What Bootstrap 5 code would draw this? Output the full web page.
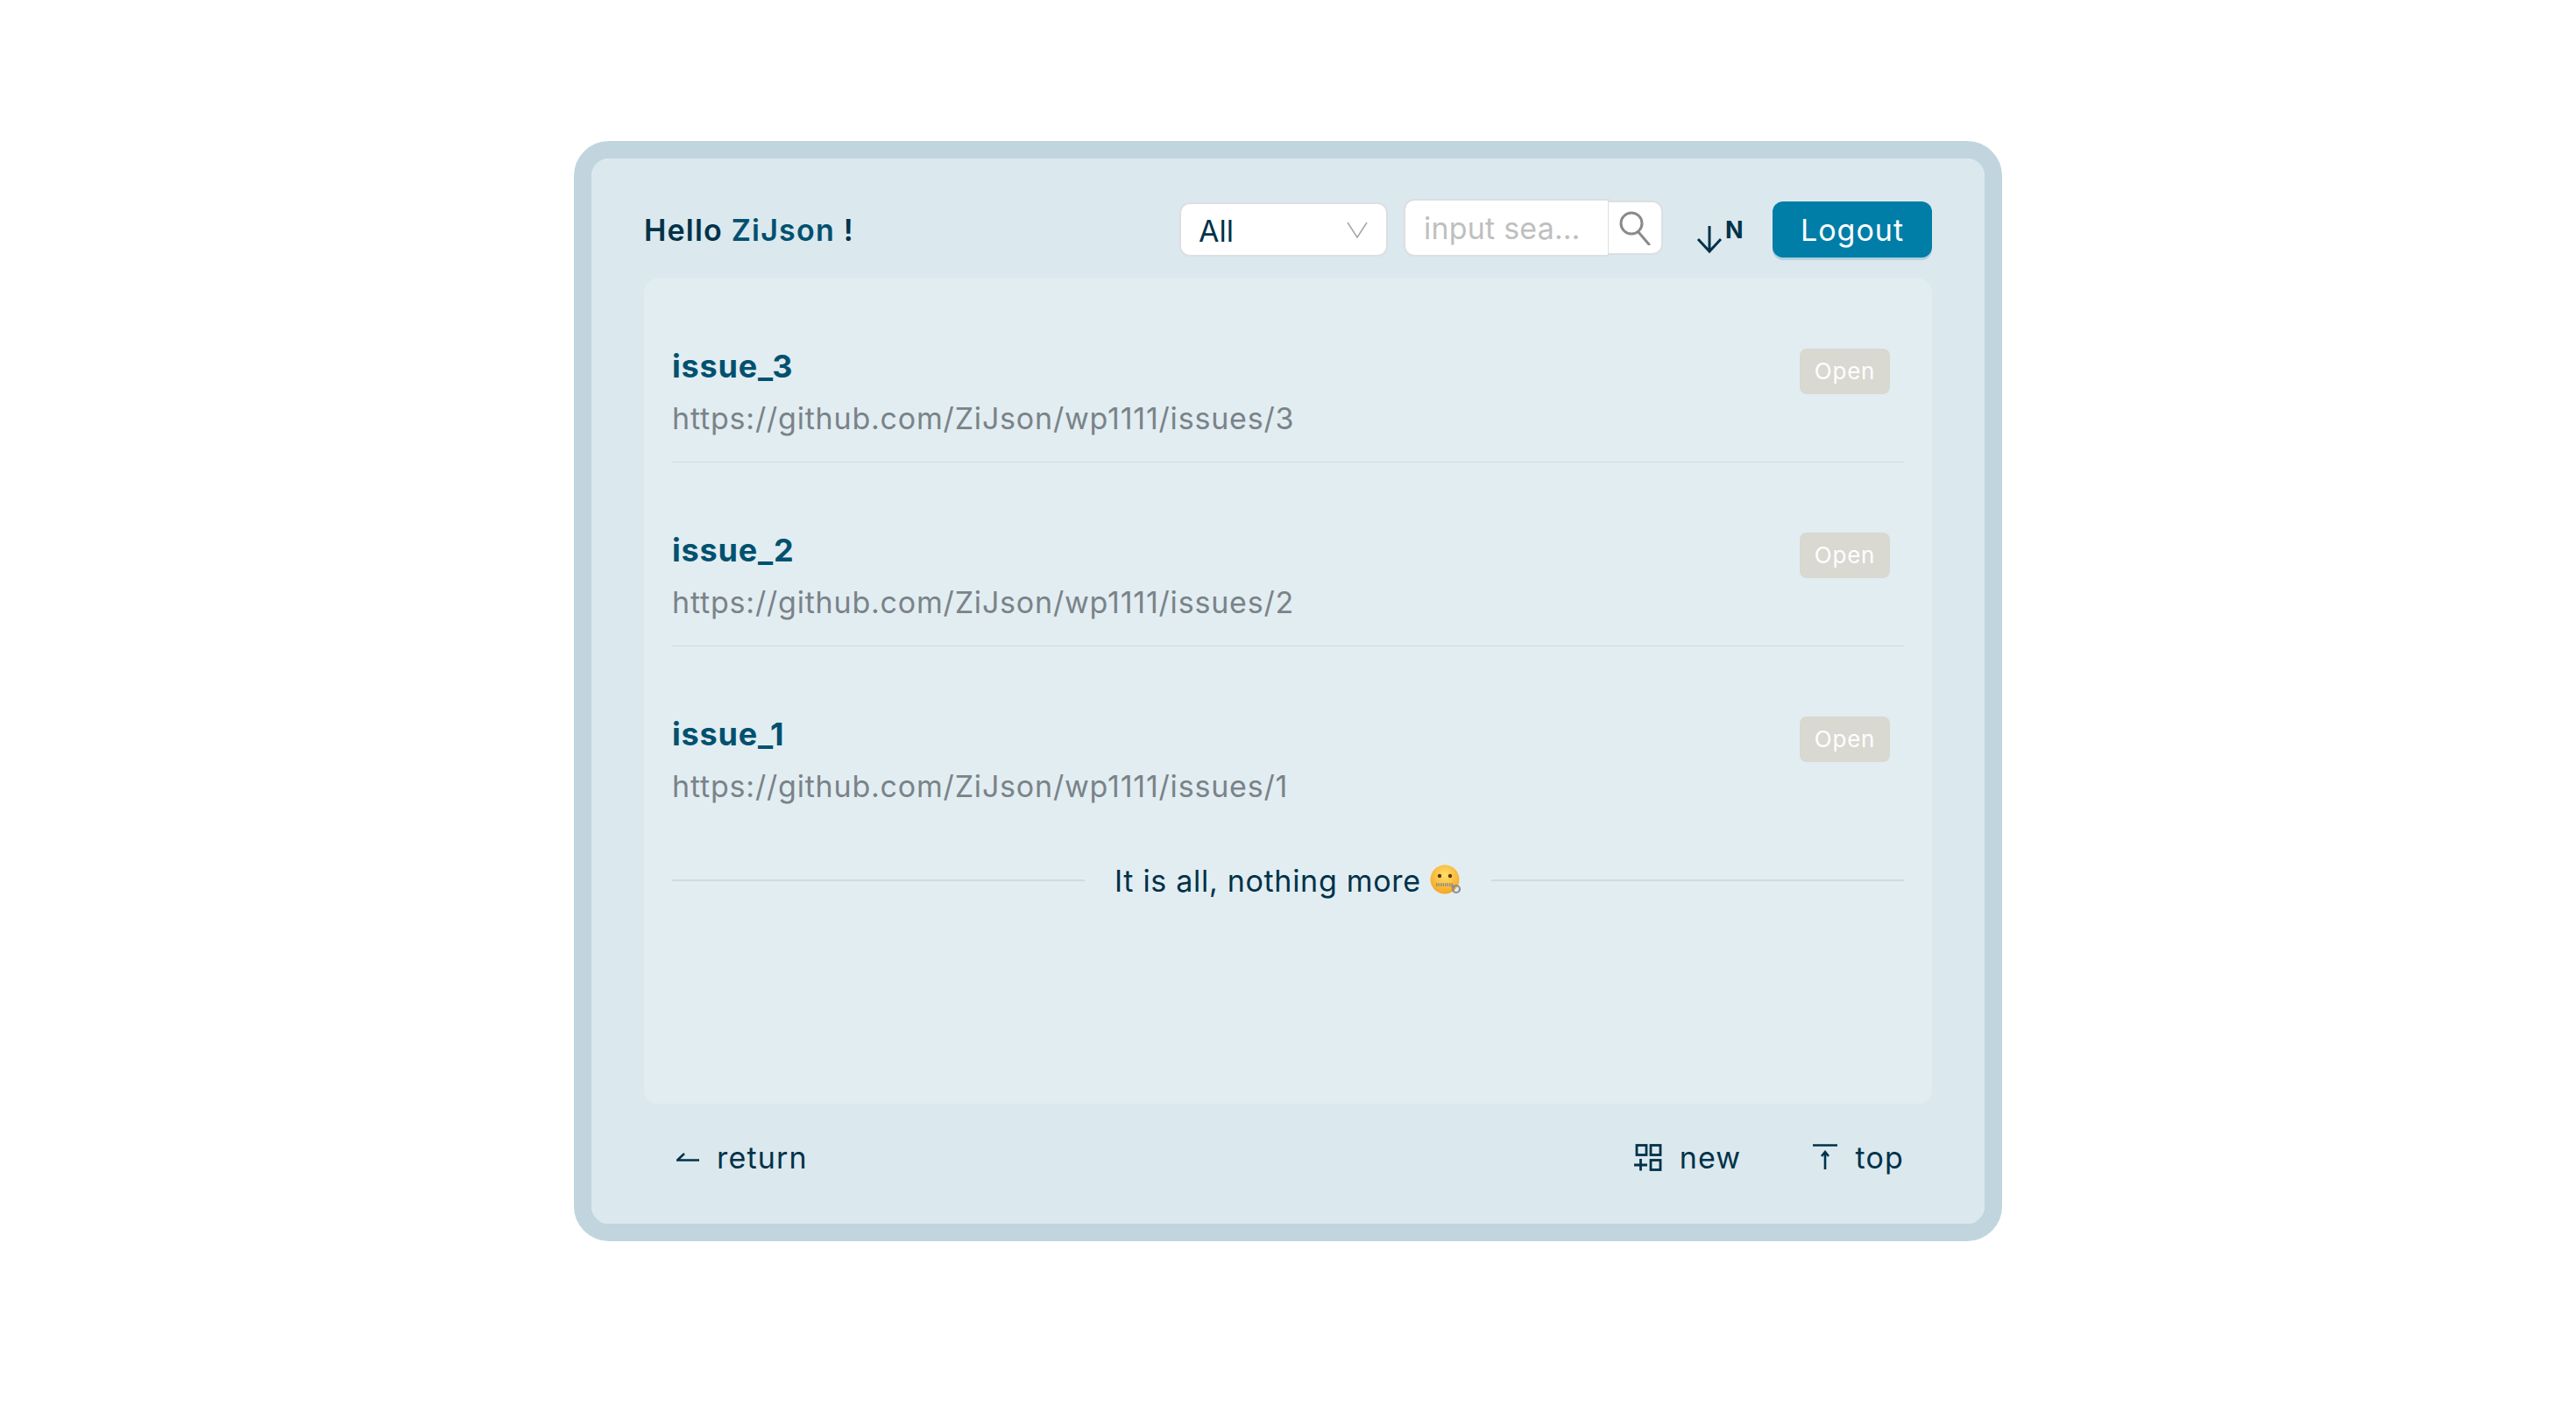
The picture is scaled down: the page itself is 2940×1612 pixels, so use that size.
<!DOCTYPE html>
<html lang="en">
<head>
  <meta charset="UTF-8" />
  <meta name="viewport" content="width=device-width, initial-scale=1.0"/>
  <title>Issues</title>
  <link href="https://cdn.jsdelivr.net/npm/bootstrap@5.3.0/dist/css/bootstrap.min.css" rel="stylesheet">
  <style>
    body {
      background: #fff;
      color: #003249;
      font-family: Inter, "Liberation Sans", sans-serif;
    }

    .frame {
      width: 1630px;
      height: 1256px;
      margin: 161px auto 0;
      padding: 0 60px;
      background: #dbe8ee;
      border: 20px solid #c0d5dd;
      border-radius: 40px;
      background-clip: padding-box;
    }

    .top-bar { height: 137px; padding-top: 25px; }

    .hello {
      font-size: 34px;
      font-weight: 600;
      letter-spacing: 1.2px;
    }

    .hello span { color: #00516f; }

    .kind-select {
      width: 238px;
      height: 62px;
      padding: 2px 20px 0;
      font-size: 34px;
      color: #003249;
      border: 2px solid #dcdfe1;
      border-radius: 12px;
      background-position: right 20px center;
      background-size: 26px 26px;
      background-image: url("data:image/svg+xml,%3csvg xmlns='http://www.w3.org/2000/svg' viewBox='0 0 26 26'%3e%3cpath fill='none' stroke='%23a8a8a8' stroke-width='1.6' d='M2 5l11 17L24 5'/%3e%3c/svg%3e");
    }

    .search-box { width: 296px; margin: -4px 0 0 18px; align-items: center; }

    .search-box .form-control {
      height: 66px;
      padding: 0 21px;
      font-size: 34px;
      letter-spacing: .2px;
      color: #003249;
      border: 2px solid #dcdfe1;
      border-radius: 12px 0 0 12px;
      text-overflow: ellipsis;
    }

    .search-box .form-control::placeholder { color: #bfbfbf; }

    .search-btn {
      width: 62px;
      height: 62px;
      padding: 0;
      background: #fff;
      border: 2px solid #dcdfe1;
      border-left: 0;
      border-radius: 0 12px 12px 0;
    }

    .sort-btn { margin-left: 38px; margin-right: 33px; width: 54px; height: 60px; }

    .logout-btn {
      width: 182px;
      height: 64px;
      padding: 0;
      font-size: 34px;
      letter-spacing: 1px;
      color: #fff;
      background: #007ea7;
      border: 0;
      border-radius: 12px;
      box-shadow: 0 3px 0 #afd2dc;
    }

    .issue-panel {
      height: 942px;
      padding: 0 32px;
      background: #e2edf2;
      border-radius: 16px;
    }

    .issue-row {
      height: 210px;
      padding: 0;
      background: transparent;
      border-color: #cfdbe1;
      border-width: 0 0 2px;
    }

    .issue-row:last-child { border-bottom-width: 0; }

    .issue-text { padding-top: 76px; }

    .issue-title {
      font-size: 36px;
      line-height: 48px;
      font-weight: 700;
      letter-spacing: .8px;
      color: #00516f;
    }

    .issue-url {
      margin-top: 13px;
      font-size: 34px;
      line-height: 46px;
      letter-spacing: .8px;
      color: #7a8388;
    }

    .open-tag {
      width: 103px;
      height: 52px;
      margin: 80px 16px 0 0;
      padding: 0;
      font-size: 26px;
      font-weight: 400;
      line-height: 52px;
      letter-spacing: .8px;
      color: #fff;
      background: #d9d8d1;
      border-radius: 8px;
    }

    .end-line { margin-top: 34px; height: 46px; }

    .end-line hr {
      flex: 1;
      margin: 0;
      border: 0;
      border-top: 2px solid #cfdbe1;
      opacity: 1;
    }

    .end-text {
      padding: 0 34px;
      font-size: 34px;
      letter-spacing: .7px;
      white-space: nowrap;
    }

    .end-text svg { vertical-align: -5px; }

    .foot-bar { height: 137px; padding: 0 32px 15px 37px; }

    .foot-link {
      font-size: 34px;
      letter-spacing: 1.2px;
      color: #003249;
      padding: 0;
      border: 0;
      background: none;
      gap: 20px;
    }

    .foot-new { margin-right: 82px; }
  </style>
</head>
<body>
  <div class="frame d-flex flex-column">
    <div class="top-bar d-flex align-items-center">
      <div class="hello me-auto">Hello <span>ZiJson</span> !</div>
      <select class="form-select kind-select">
        <option>All</option>
      </select>
      <div class="input-group search-box flex-nowrap">
        <input type="text" class="form-control" placeholder="input search text">
        <button class="btn search-btn d-flex align-items-center justify-content-center" type="button">
          <svg width="38" height="40" viewBox="0 0 38 40" fill="none" stroke="#8a8a8a" stroke-width="3">
            <circle cx="15" cy="15" r="12"/>
            <path d="M23 25l12 14" stroke-linecap="round"/>
          </svg>
        </button>
      </div>
      <div class="sort-btn">
        <svg width="54" height="60" viewBox="0 0 54 60">
          <path d="M15 26v29M2 41l13 14 13-14" fill="none" stroke="#003249" stroke-width="3"/>
          <text x="33" y="40" font-size="27" font-weight="700" fill="#003249" font-family="Inter, sans-serif">N</text>
        </svg>
      </div>
      <button class="btn logout-btn" type="button">Logout</button>
    </div>

    <div class="issue-panel">
      <ul class="list-group list-group-flush">
        <li class="list-group-item issue-row d-flex justify-content-between">
          <div class="issue-text">
            <div class="issue-title">issue_3</div>
            <div class="issue-url">https://github.com/ZiJson/wp1111/issues/3</div>
          </div>
          <span class="badge open-tag">Open</span>
        </li>
        <li class="list-group-item issue-row d-flex justify-content-between">
          <div class="issue-text">
            <div class="issue-title">issue_2</div>
            <div class="issue-url">https://github.com/ZiJson/wp1111/issues/2</div>
          </div>
          <span class="badge open-tag">Open</span>
        </li>
        <li class="list-group-item issue-row d-flex justify-content-between">
          <div class="issue-text">
            <div class="issue-title">issue_1</div>
            <div class="issue-url">https://github.com/ZiJson/wp1111/issues/1</div>
          </div>
          <span class="badge open-tag">Open</span>
        </li>
      </ul>
      <div class="end-line d-flex align-items-center">
        <hr>
        <div class="end-text">It is all, nothing more <svg width="36" height="36" viewBox="0 0 36 36">
            <defs>
              <radialGradient id="faceFill" cx="50%" cy="35%" r="65%">
                <stop offset="0" stop-color="#ffdf6b"/>
                <stop offset="1" stop-color="#f5a623"/>
              </radialGradient>
            </defs>
            <circle cx="17" cy="17" r="16.5" fill="url(#faceFill)"/>
            <circle cx="11" cy="13" r="2.200" fill="#5b3a10"/>
            <circle cx="23" cy="13" r="2.200" fill="#5b3a10"/>
            <path d="M7 23h19" stroke="#8d8d85" stroke-width="3.5" stroke-dasharray="1.5 1"/>
            <circle cx="30" cy="28" r="4" fill="none" stroke="#8d8d8d" stroke-width="2.2"/>
            <path d="M25 24l3 3" stroke="#8d8d8d" stroke-width="3"/>
          </svg></div>
        <hr>
      </div>
    </div>

    <div class="foot-bar d-flex align-items-center justify-content-between">
      <button class="btn foot-link d-flex align-items-center" type="button">
        <svg width="26" height="10" viewBox="0 0 26 10" fill="none" stroke="#003249" stroke-width="2.6">
          <path d="M26 8.500H1L9 1"/>
        </svg>
        return
      </button>
      <div class="d-flex align-items-center">
        <button class="btn foot-link foot-new d-flex align-items-center" type="button">
          <svg width="32" height="31" viewBox="0 0 32 31" fill="none" stroke="#003249" stroke-width="2.8">
            <rect x="3" y="1.500" width="11" height="11"/>
            <rect x="19" y="1.500" width="11" height="11"/>
            <rect x="19" y="18.500" width="11" height="11"/>
            <path d="M0 24h15M7.500 17v13.500"/>
          </svg>
          new
        </button>
        <button class="btn foot-link d-flex align-items-center" type="button">
          <svg width="28" height="30" viewBox="0 0 28 30" fill="none" stroke="#003249" stroke-width="2.6">
            <path d="M0 1.500h28M14 29V9M10 14l4-5 4 5"/>
          </svg>
          top
        </button>
      </div>
    </div>
  </div>
  <script src="https://cdn.jsdelivr.net/npm/bootstrap@5.3.0/dist/js/bootstrap.bundle.min.js"></script>
</body>
</html>
